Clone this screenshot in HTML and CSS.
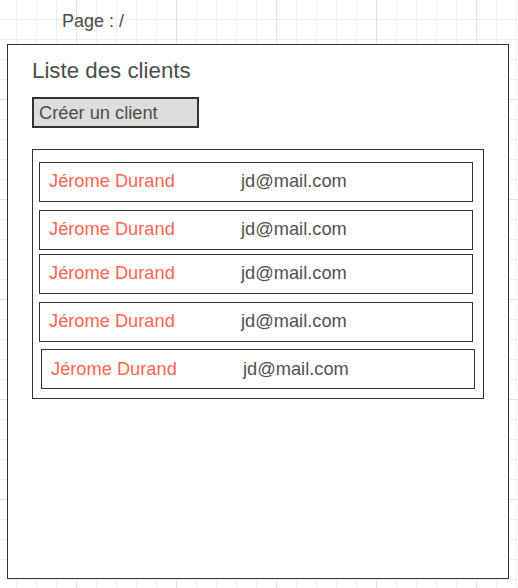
FILE: index.html
```html
<!DOCTYPE html>
<html lang="fr">
<head>
<meta charset="utf-8">
<title>Liste des clients</title>
<link rel="stylesheet" href="styles.css">
</head>
<body>
<div class="canvas">
  <div class="page-label">Page : /</div>
  <div class="frame">
    <h1 class="title">Liste des clients</h1>
    <div class="btn">Créer un client</div>
    <div class="list">
      <div class="row"><span class="name">Jérome Durand</span><span class="email">jd@mail.com</span></div>
      <div class="row gap-8"><span class="name">Jérome Durand</span><span class="email">jd@mail.com</span></div>
      <div class="row gap-4"><span class="name">Jérome Durand</span><span class="email">jd@mail.com</span></div>
      <div class="row gap-8"><span class="name">Jérome Durand</span><span class="email">jd@mail.com</span></div>
      <div class="row gap-7 shift"><span class="name">Jérome Durand</span><span class="email">jd@mail.com</span></div>
    </div>
  </div>
</div>
</body>
</html>
```

FILE: styles.css
```css
* { box-sizing: border-box; }
html, body { margin: 0; padding: 0; }
body {
  width: 518px;
  height: 588px;
  overflow: hidden;
  font-family: "Liberation Sans", Arial, sans-serif;
  color: #505050;
  background-color: #fff;
  background-image:
    linear-gradient(to right, #e2e2e2 1px, transparent 1px),
    linear-gradient(to bottom, #e2e2e2 1px, transparent 1px),
    linear-gradient(to right, #efefef 1px, transparent 1px),
    linear-gradient(to bottom, #efefef 1px, transparent 1px);
  background-size: 100px 100px, 100px 100px, 20px 20px, 20px 20px;
  background-position: 76px 0, 0 99px, 16px 0, 0 19px;
}
.canvas {
  padding-top: 11px;
}
.page-label {
  font-size: 18px;
  line-height: 21px;
  padding-left: 62px;
  height: 33px;
  color: #4d4d4d;
}
.frame {
  margin-left: 7px;
  width: 502px;
  height: 535px;
  border: 1px solid #333;
  background: #fff;
  padding: 13px 24px 0 24px;
}
.title {
  margin: 0;
  font-weight: normal;
  font-size: 22.3px;
  line-height: 26px;
  color: #4d4d4d;
}
.btn {
  margin-top: 13px;
  width: 167px;
  height: 31px;
  border: 2px solid #333;
  background: #dddddd;
  font-size: 18.25px;
  line-height: 21px;
  padding: 3px 0 0 5px;
  color: #4d4d4d;
}
.list {
  margin-top: 21px;
  width: 452px;
  height: 250px;
  border: 1px solid #333;
  padding: 12px 0 0 6px;
}
.row {
  display: flex;
  width: 434px;
  height: 40px;
  border: 1px solid #333;
  padding: 6.5px 0 0 9px;
  font-size: 18.25px;
  line-height: 21px;
}
.gap-8 { margin-top: 8px; }
.gap-4 { margin-top: 4px; }
.gap-7 { margin-top: 7px; }
.shift { margin-left: 2px; padding-top: 7.5px; }
.name {
  width: 192px;
  flex: none;
  color: #ff6650;
}
.email {
  color: #525252;
}
```
